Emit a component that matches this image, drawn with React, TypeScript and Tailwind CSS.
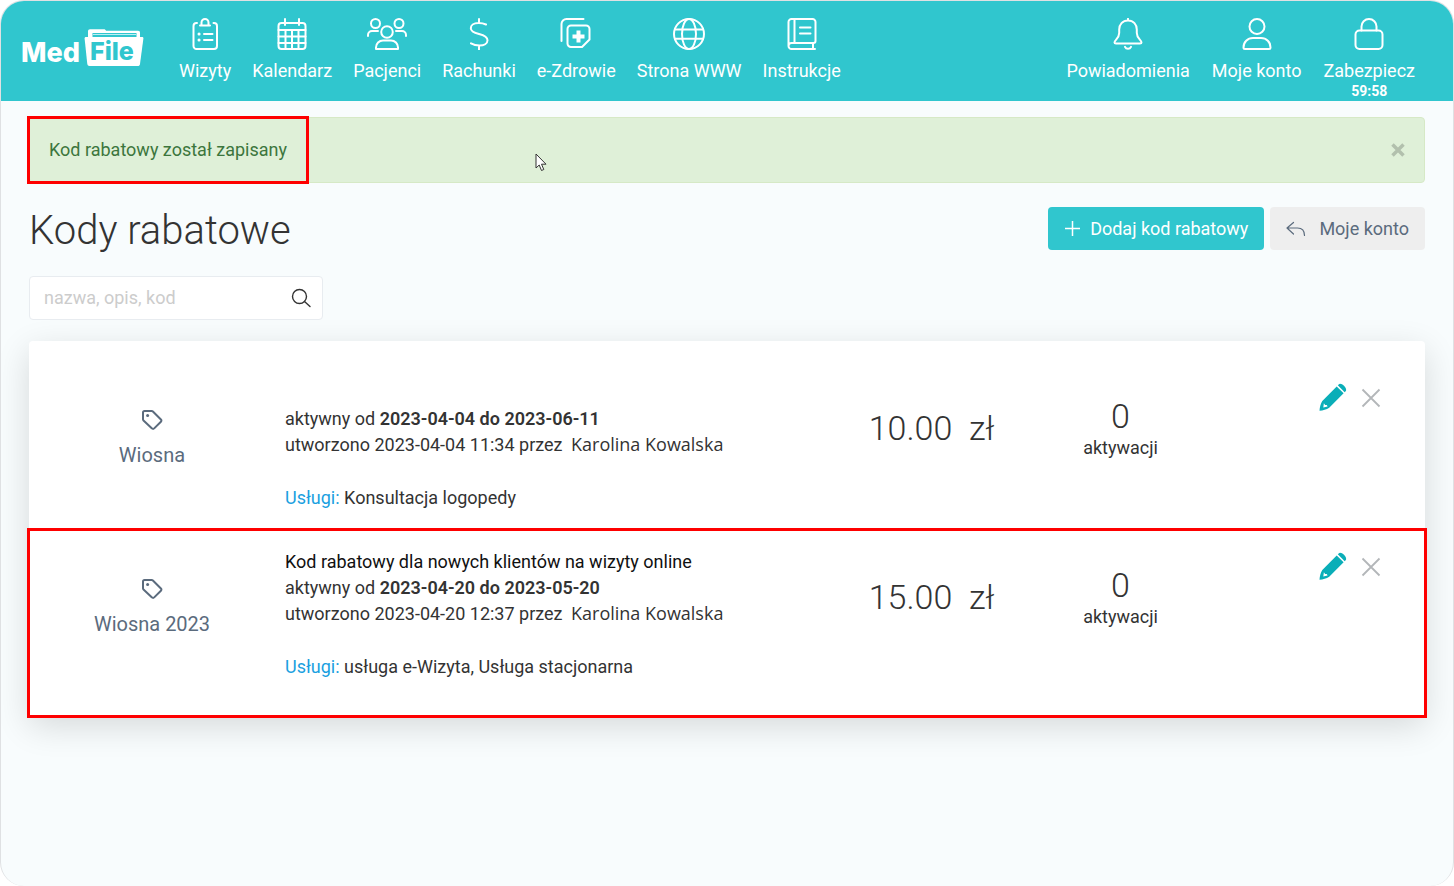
import React from 'react';

interface DiscountCode {
  id: number;
  name: string;
  description?: string;
  from: string;
  to: string;
  createdAt: string;
  author: string;
  services: string;
  amount: string;
  activations: number;
  highlighted?: boolean;
}

const codes: DiscountCode[] = [
  {
    id: 1,
    name: 'Wiosna',
    from: '2023-04-04',
    to: '2023-06-11',
    createdAt: '2023-04-04 11:34',
    author: 'Karolina Kowalska',
    services: 'Konsultacja logopedy',
    amount: '10.00',
    activations: 0,
  },
  {
    id: 2,
    name: 'Wiosna 2023',
    description: 'Kod rabatowy dla nowych klientów na wizyty online',
    from: '2023-04-20',
    to: '2023-05-20',
    createdAt: '2023-04-20 12:37',
    author: 'Karolina Kowalska',
    services: 'usługa e-Wizyta, Usługa stacjonarna',
    amount: '15.00',
    activations: 0,
    highlighted: true,
  },
];

const NavIcon: React.FC<{ wide?: boolean; children: React.ReactNode }> = ({ wide, children }) => (
  <svg
    viewBox={wide ? '0 0 40 32' : '0 0 32 32'}
    className={wide ? 'h-8 w-10' : 'size-8'}
    fill="none"
    stroke="currentColor"
    strokeWidth="2"
    strokeLinecap="round"
    strokeLinejoin="round"
    aria-hidden="true"
  >
    {children}
  </svg>
);

const mainNav = [
  {
    label: 'Wizyty',
    icon: (
      <NavIcon>
        <path d="M8 5H7.500a3 3 0 0 0-3 3v20a3 3 0 0 0 3 3h17.500a3 3 0 0 0 3-3V8a3 3 0 0 0-3-3h-.5" />
        <path d="M11 7.500h10M12.500 7V4.500a3.500 3.500 0 0 1 7 0V7" />
        <path d="M15 16h8.500M15 22h8.500" />
        <path d="M10 16h.1M10 22h.1" strokeWidth="3" />
      </NavIcon>
    ),
  },
  {
    label: 'Kalendarz',
    icon: (
      <NavIcon>
        <rect x="2.500" y="5" width="27" height="26" rx="3" />
        <path d="M9 1v6M23 1v6M2.500 12h27M2.500 18.500h27M2.500 25h27M9.500 12v19M16 12v19M22.500 12v19" />
      </NavIcon>
    ),
  },
  {
    label: 'Pacjenci',
    icon: (
      <NavIcon wide>
        <circle cx="8.500" cy="5.500" r="4.500" />
        <circle cx="32" cy="5.500" r="4.500" />
        <circle cx="20" cy="14" r="5.800" />
        <path d="M1 18v-1a4 4 0 0 1 4-4h6M39 18v-1a4 4 0 0 0-4-4h-6" />
        <path d="M9 31v-1.500a7 7 0 0 1 7-7h8a7 7 0 0 1 7 7V31z" />
      </NavIcon>
    ),
  },
  {
    label: 'Rachunki',
    icon: (
      <NavIcon>
        <path d="M16 1v4M16 27.500v4M23 6.500C20.500 5.300 18 5 15.500 5 10.500 5 7.800 7.300 7.800 10.200c0 3.300 3.200 4.500 8.200 5.800 5 1.300 8.500 2.800 8.500 6.200 0 3.400-3.500 5.300-8 5.300-3.200 0-6-.7-8.500-2.200" />
      </NavIcon>
    ),
  },
  {
    label: 'e-Zdrowie',
    icon: (
      <NavIcon>
        <path d="M1.500 23V6a5 5 0 0 1 5-5h17" />
        <path d="M11 7.500h15a3.500 3.500 0 0 1 3.500 3.500v10.500l-7.500 7.500H11A3.500 3.500 0 0 1 7.500 25.500V11A3.500 3.500 0 0 1 11 7.500z" />
        <path d="M18.500 12.500v12M12.500 18.500h12" strokeWidth="4" strokeLinecap="butt" />
      </NavIcon>
    ),
  },
  {
    label: 'Strona WWW',
    icon: (
      <NavIcon>
        <circle cx="16" cy="16" r="15" />
        <ellipse cx="16" cy="16" rx="7" ry="15" />
        <path d="M2 11.500h28M2 20.800h28" />
      </NavIcon>
    ),
  },
  {
    label: 'Instrukcje',
    icon: (
      <NavIcon>
        <path d="M2.500 28V4a3 3 0 0 1 3-3h21a3 3 0 0 1 3 3v19a2 2 0 0 1-2 2h-22a3 3 0 0 0-3 3 3 3 0 0 0 3 3h23.500M27 25v6M8.500 1v24" />
        <path d="M14 9.500h10.500M14 15.500h10.500" />
      </NavIcon>
    ),
  },
];

const accountNav = [
  {
    label: 'Powiadomienia',
    icon: (
      <NavIcon>
        <path d="M16 .8v1.700M16 2.500c-5.500 0-8.800 4-8.800 9v3.500c0 5.500-4.700 7-4.700 9.500 0 .8.600 1 1.500 1h24c.9 0 1.500-.2 1.500-1 0-2.500-4.700-4-4.700-9.500v-3.500c0-5-3.300-9-8.800-9zM13 28.800c.6 1.400 1.600 2 3 2s2.400-.6 3-2" />
      </NavIcon>
    ),
  },
  {
    label: 'Moje konto',
    icon: (
      <NavIcon>
        <circle cx="16" cy="8.500" r="7.500" />
        <path d="M2.500 29.500c0-5.500 4-9.500 9.500-9.500h8c5.500 0 9.500 4 9.500 9.500 0 1-.5 1.500-1.500 1.500H4c-1 0-1.500-.5-1.500-1.500z" />
      </NavIcon>
    ),
  },
  {
    label: 'Zabezpiecz',
    note: '59:58',
    icon: (
      <NavIcon>
        <rect x="2.500" y="12.500" width="27" height="18.500" rx="4" />
        <path d="M8.500 12.500V8.500a7.500 7.500 0 0 1 15 0v4" />
      </NavIcon>
    ),
  },
];

const NavItem: React.FC<{ label: string; icon: React.ReactNode; note?: string }> = ({ label, icon, note }) => (
  <a href="#" className="flex flex-col items-center whitespace-nowrap text-lg leading-6 text-white">
    {icon}
    <span className="mt-[9px]">{label}</span>
    {note && <span className="text-sm font-bold leading-4">{note}</span>}
  </a>
);

const Logo: React.FC = () => (
  <a href="#" aria-label="MedFile">
    <svg viewBox="0 0 124 42" className="h-[42px] w-[124px]" fontFamily="Inter, sans-serif" fontWeight="800">
      <path d="M67 10V3.500C67 2 67.800 1.200 69 1.200h14c1 0 1.500.5 2 1.500h32c1.500 0 2 .8 2 2V10z" fill="#fff" />
      <path d="M71.500 5h44v4h-44z" fill="#30c6ce" />
      <path d="M72 6.500h43" stroke="#bfeef2" strokeWidth="1" />
      <path d="M65 9h56c1.200 0 1.500.6 1.400 1.600L119 36c-.2 1.400-1 2-2.300 2H68.500c-1.300 0-2-.7-2.200-2L63.600 10.600C63.500 9.600 64 9 65 9z" fill="#fff" />
      <text x="0" y="34" fontSize="27" fill="#fff">Med</text>
      <text x="69" y="32" fontSize="25" fill="#30c6ce">File</text>
    </svg>
  </a>
);

const TagIcon: React.FC = () => (
  <svg viewBox="0 0 22 22" className="size-[22px]" fill="none" stroke="currentColor" strokeWidth="2" strokeLinejoin="round" aria-hidden="true">
    <path d="M2 3.500A1.500 1.500 0 0 1 3.500 2h7.200c.5 0 .9.200 1.200.5l8 8c.7.700.7 1.500 0 2.200l-6.700 6.700c-.7.700-1.500.7-2.200 0l-8.500-8A1.500 1.500 0 0 1 2 10.200z" />
    <circle cx="6.600" cy="6.600" r="1.500" fill="currentColor" stroke="none" />
  </svg>
);

const PencilIcon: React.FC = () => (
  <svg viewBox="0 0 28 28" className="size-7" fill="#0aaeb8" aria-hidden="true">
    <path d="M18.800 2.300l.9-.9c2.500-2.500 9.300 4.300 6.900 6.900l-.9.900z" />
    <path d="M17.700 3.400l6.900 6.900L10.200 24.800C7.500 26.500 4 27.500.5 27.800c.2-3.500 1-7 2.800-9.900zM4.900 20.300l-.6 4.300 4.300-1-.8-1.500-1.700-.2z" fillRule="evenodd" />
  </svg>
);

const CodeRow: React.FC<{ code: DiscountCode }> = ({ code }) => (
  <li
    className={`grid grid-cols-[246fr_579fr_155fr_223fr_193fr] pt-[19px] ${
      code.highlighted ? 'pb-9 outline-3 -outline-offset-1 outline-[#fe0000]' : 'pb-[19px]'
    }`}
  >
    <div className="flex flex-col items-center pt-[29px] text-[#5b6b7d]">
      <TagIcon />
      <span className="mt-2.5 text-xl leading-7">{code.name}</span>
    </div>
    <div className="pl-2.5 text-lg leading-[26px] text-[#333]">
      <p className="min-h-[26px] text-[#111]">{code.description}</p>
      <p>
        aktywny od <strong className="font-semibold">{code.from} do {code.to}</strong>
      </p>
      <p>
        utworzono {code.createdAt} przez <span className="ml-1 font-['Open_Sans',sans-serif] leading-none">{code.author}</span>
      </p>
      <p className="mt-[27px]">
        <a href="#" className="text-[#1a9fe0]">Usługi:</a> {code.services}
      </p>
    </div>
    <div className="whitespace-pre pt-7 text-center text-[34px] font-light leading-10 text-[#333]">
      {code.amount}  zł
    </div>
    <div className="flex flex-col items-center pt-[17px] text-[#333]">
      <span className="text-[34px] font-light leading-[38px]">{code.activations}</span>
      <span className="text-lg leading-[26px]">aktywacji</span>
    </div>
    <div className="flex items-start justify-end gap-3.5 pr-11 pt-[3px]">
      <button type="button" aria-label="Edytuj">
        <PencilIcon />
      </button>
      <button type="button" aria-label="Usuń" className="pt-[5px]">
        <svg viewBox="0 0 20 20" className="size-5" stroke="#b3b6b9" strokeWidth="1.800" aria-hidden="true">
          <path d="M1.500 1.500l17 17M18.500 1.500l-17 17" />
        </svg>
      </button>
    </div>
  </li>
);

export default function App() {
  return (
    <div className="min-h-screen bg-white font-[Roboto,sans-serif]">
      <div className="min-h-screen overflow-hidden rounded-3xl border border-b-0 border-[#dfe1e3] bg-[#f8fcfd]">
        <header className="flex h-[100px] items-start bg-[#30c6ce] pl-5 pr-[38px] pt-[17px]">
          <div className="pt-2.5">
            <Logo />
          </div>
          <nav className="ml-[34px] flex gap-[21px]">
            {mainNav.map(item => (
              <NavItem key={item.label} {...item} />
            ))}
          </nav>
          <nav className="ml-auto flex gap-[22px]">
            {accountNav.map(item => (
              <NavItem key={item.label} {...item} />
            ))}
          </nav>
        </header>

        <main className="px-7 pb-12 pt-4">
          <div role="status" className="relative flex items-center justify-between rounded border border-[#d6e9c6] bg-[#dff0d8] py-5 pl-[19px] pr-[19px] text-lg leading-6 text-[#3c763d]">
            <span className="outline-3 outline-offset-[19px] outline-[#fe0000]">Kod rabatowy został zapisany</span>
            <button type="button" aria-label="Zamknij">
              <svg viewBox="0 0 14 14" className="size-3.5" stroke="#b2c0ad" strokeWidth="3.500" aria-hidden="true">
                <path d="M1.500 1.500l11 11M12.500 1.500l-11 11" />
              </svg>
            </button>
            <svg viewBox="0 0 12 19" className="absolute left-[505px] top-[35px] h-[19px] w-3" aria-hidden="true">
              <path d="M1 1v14l3.200-3 2.300 5.500 2.300-1-2.300-5.300H11z" fill="#fff" stroke="#333" strokeWidth="1" />
            </svg>
          </div>

          <div className="mt-6 flex items-start justify-between">
            <h1 className="text-[40px] font-light leading-[48px] text-[#333]">Kody rabatowe</h1>
            <div className="flex gap-1.5">
              <button type="button" className="flex h-[43px] items-center gap-[9px] rounded bg-[#30c6ce] px-4 text-lg text-white">
                <svg viewBox="0 0 17 17" className="size-[17px]" stroke="currentColor" strokeWidth="1.500" aria-hidden="true">
                  <path d="M8.500 1v15M1 8.500h15" />
                </svg>
                Dodaj kod rabatowy
              </button>
              <button type="button" className="flex h-[43px] items-center gap-[13px] rounded bg-[#eee] px-4 text-lg text-[#5b6b7d]">
                <svg viewBox="0 0 20 16" className="h-4 w-5" fill="none" stroke="currentColor" strokeWidth="1.200" strokeLinecap="round" strokeLinejoin="round" aria-hidden="true">
                  <path d="M7.500 1.500L1 7l6.500 6M1 7h10.500c4.500 0 7 2.500 7 7.500" />
                </svg>
                Moje konto
              </button>
            </div>
          </div>

          <div className="mt-[21px] flex h-11 w-[294px] items-center rounded border border-[#e8ecf0] bg-white pl-3.5 pr-[11px]">
            <input
              type="search"
              aria-label="Szukaj kodu"
              placeholder="nazwa, opis, kod"
              className="min-w-0 flex-1 text-lg text-[#333] outline-none placeholder:text-[#ccc]"
            />
            <button type="button" aria-label="Szukaj">
              <svg viewBox="0 0 20 20" className="size-5" fill="none" stroke="#333" strokeWidth="1.400" strokeLinecap="round" aria-hidden="true">
                <circle cx="8.500" cy="8.500" r="7" />
                <path d="M13.500 13.500l5.500 5" />
              </svg>
            </button>
          </div>

          <ul className="mt-[21px] rounded bg-white pt-5 shadow-[0_10px_34px_rgba(0,0,0,0.14)]">
            {codes.map(code => (
              <CodeRow key={code.id} code={code} />
            ))}
          </ul>
        </main>
      </div>
    </div>
  );
}
